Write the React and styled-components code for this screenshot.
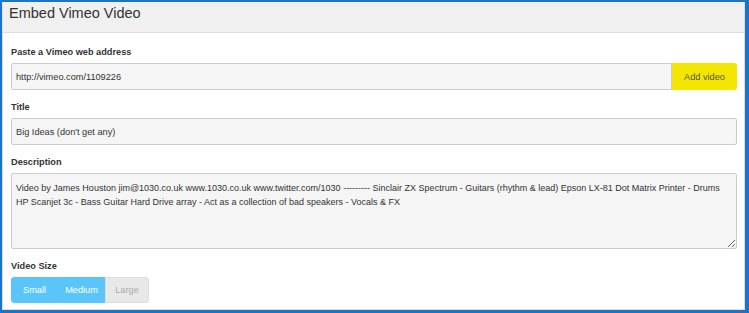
import React from "react";
import styled, { createGlobalStyle } from "styled-components";

const description =
  "Video by James Houston jim@1030.co.uk www.1030.co.uk www.twitter.com/1030 --------- Sinclair ZX Spectrum - Guitars (rhythm & lead) Epson LX-81 Dot Matrix Printer - Drums HP Scanjet 3c - Bass Guitar Hard Drive array - Act as a collection of bad speakers - Vocals & FX";

const sizes = [
  { label: "Small", active: true },
  { label: "Medium", active: true },
  { label: "Large", active: false },
];

const App = () => {
  return (
    <>
      <GlobalStyle />
      <Frame>
        <Panel>
          <Header>
            <h1>Embed Vimeo Video</h1>
          </Header>
          <Body>
            <Group>
              <Label>Paste a Vimeo web address</Label>
              <InputRow>
                <Input defaultValue="http://vimeo.com/1109226" $joined />
                <AddButton>Add video</AddButton>
              </InputRow>
            </Group>
            <Group>
              <Label>Title</Label>
              <Input defaultValue="Big Ideas (don't get any)" />
            </Group>
            <Group>
              <Label>Description</Label>
              <TextArea defaultValue={description} />
            </Group>
            <Group>
              <Label>Video Size</Label>
              <SizeGroup>
                {sizes.map((s) => (
                  <SizeButton key={s.label} $active={s.active}>
                    {s.label}
                  </SizeButton>
                ))}
              </SizeGroup>
            </Group>
          </Body>
        </Panel>
      </Frame>
    </>
  );
};

const GlobalStyle = createGlobalStyle`
  body {
    margin: 0;
    background: #fff;
    font-family: "Liberation Sans", Arial, sans-serif;
  }
`;

const Frame = styled.div`
  width: 749px;
  height: 313px;
  box-sizing: border-box;
  border: 2px solid #1a74c9;
  border-right-width: 4px;
  border-bottom-width: 3px;
  display: flex;
`;

const Panel = styled.div`
  flex: 1;
  border: 1px solid #dcdcdc;
  border-top: none;
  display: flex;
  flex-direction: column;
  overflow: hidden;
`;

const Header = styled.div`
  height: 31px;
  box-sizing: border-box;
  background: #f0f0f0;
  border-bottom: 1px solid #dddddd;
  padding: 1px 0 0 6px;
  h1 {
    margin: 0;
    font-size: 14.5px;
    font-weight: 400;
    line-height: 20px;
    color: #333;
  }
`;

const Body = styled.div`
  padding: 12px 7px 0 8px;
  display: flex;
  flex-direction: column;
  gap: 10px;
`;

const Group = styled.div`
  display: flex;
  flex-direction: column;
`;

const Label = styled.label`
  font-size: 9.2px;
  font-weight: 700;
  line-height: 15px;
  color: #333;
  margin-bottom: 3px;
`;

const InputRow = styled.div`
  display: flex;
`;

const Input = styled.input`
  flex-grow: 1;
  min-width: 0;
  height: 27px;
  box-sizing: border-box;
  background: #f5f5f5;
  border: 1px solid #cccccc;
  border-radius: ${(p) => (p.$joined ? "2px 0 0 2px" : "2px")};
  padding: 0 4px;
  font-family: inherit;
  font-size: 9.2px;
  color: #333;
  outline: none;
`;

const AddButton = styled.button`
  width: 65px;
  height: 27px;
  border: none;
  border-radius: 0 3px 3px 0;
  background: #f3e600;
  font-family: inherit;
  font-size: 9.2px;
  color: #555;
  padding: 0;
`;

const TextArea = styled.textarea`
  height: 76px;
  box-sizing: border-box;
  background: #f5f5f5;
  border: 1px solid #cccccc;
  border-radius: 2px;
  padding: 7px 4px;
  font-family: inherit;
  font-size: 9px;
  line-height: 14px;
  color: #333;
  outline: none;
`;

const SizeGroup = styled.div`
  display: flex;
`;

const SizeButton = styled.button`
  width: ${(p) => (p.$active ? "47px" : "44px")};
  height: 26px;
  border: 1px solid ${(p) => (p.$active ? "#5ac5f8" : "#dddddd")};
  background: ${(p) => (p.$active ? "#5ac5f8" : "#e8e8e8")};
  color: ${(p) => (p.$active ? "#fff" : "#aaaaaa")};
  font-family: inherit;
  font-size: 9.2px;
  padding: 0;
  border-radius: 0;
  &:first-child {
    border-radius: 3px 0 0 3px;
  }
  &:last-child {
    border-radius: 0 3px 3px 0;
  }
`;

export default App;
